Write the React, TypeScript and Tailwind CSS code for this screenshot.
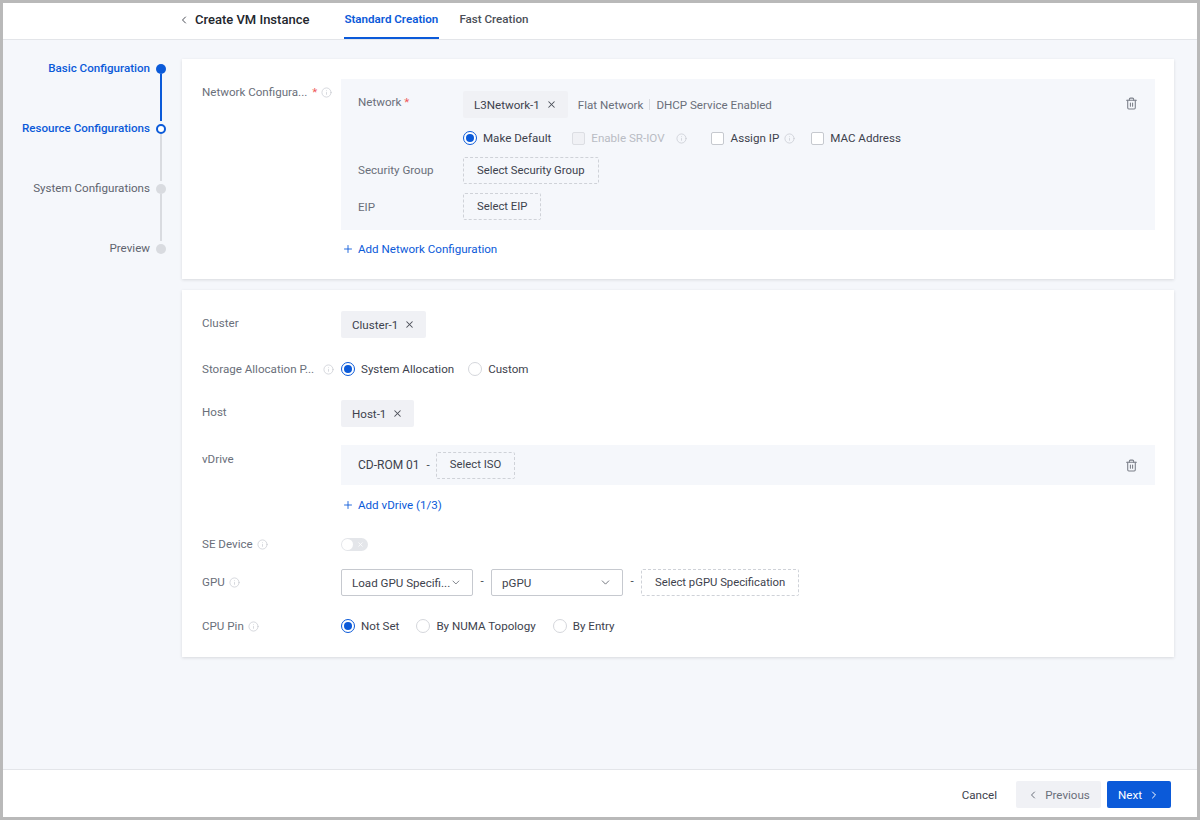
import { ChevronDown, ChevronLeft, ChevronRight, Info, Plus, Trash2, X } from "lucide-react";
import type { ReactNode } from "react";

const FONT = "font-['Roboto','Inter',sans-serif]";

function Hint({ className = "" }: { className?: string }) {
  return <Info className={`h-[11px] w-[11px] shrink-0 text-[#c4c7cf] ${className}`} strokeWidth={1.5} />;
}

function Radio({ label, checked = false }: { label: string; checked?: boolean }) {
  return (
    <span className="flex items-center gap-[6px]">
      <span
        className={`flex h-[14px] w-[14px] items-center justify-center rounded-full border bg-white ${checked ? "border-[#0b5ad9]" : "border-[#d5d7dc]"}`}
      >
        {checked && <span className="h-[8px] w-[8px] rounded-full bg-[#0b5ad9]" />}
      </span>
      <span className="text-[#3d424d]">{label}</span>
    </span>
  );
}

function Tag({ label }: { label: string }) {
  return (
    <span className="flex h-[27px] items-center gap-[6px] rounded-[2px] bg-[#f0f1f5] px-[11px] text-[#3d424d]">
      {label}
      <X className="h-[11px] w-[11px] text-[#4b4f58]" strokeWidth={2.25} />
    </span>
  );
}

function Dashed({ label }: { label: string }) {
  return (
    <span className="flex h-[27px] items-center rounded-[2px] border border-dashed border-[#cfd2d8] px-[13px] text-[11.3px] text-[#3d424d]">
      {label}
    </span>
  );
}

function Select({ label }: { label: string }) {
  return (
    <span className="flex h-[27px] w-[132px] items-center justify-between whitespace-nowrap rounded-[2px] border border-[#c6c9cf] bg-white px-[10px] text-[#3d424d]">
      {label}
      <ChevronDown className="h-[13px] w-[13px] text-[#555a64]" strokeWidth={1.5} />
    </span>
  );
}

function Row({ label, children, className = "" }: { label: ReactNode; children: ReactNode; className?: string }) {
  return (
    <div className={`flex ${className}`}>
      <div className="flex w-[159px] shrink-0 items-start whitespace-nowrap pl-[20px] text-[#6a6f7a]">{label}</div>
      <div className="min-w-0 flex-1">{children}</div>
    </div>
  );
}

function Step({ label, state, last }: { label: string; state: "done" | "active" | "todo"; last?: boolean }) {
  const text = state === "todo" ? "text-[#5f646e]" : "text-[#0b5ad9] font-medium";
  const dot =
    state === "done"
      ? "bg-[#0b5ad9]"
      : state === "active"
        ? "border-2 border-[#0b5ad9] bg-white"
        : "bg-[#d9dbe0]";
  return (
    <div className="flex h-[60px] justify-end">
      <span className={`mt-[-2px] h-[18px] leading-[18px] ${text}`}>{label}</span>
      <div className="ml-[6px] flex w-[10px] flex-col items-center pt-[3px]">
        <span className={`h-[10px] w-[10px] shrink-0 rounded-full ${dot}`} />
        {!last && <span className={`w-[2px] flex-1 ${state === "done" ? "bg-[#0b5ad9]" : "bg-[#d9dbe0]"}`} />}
      </div>
    </div>
  );
}

export default function App() {
  return (
    <div className={`flex h-[820px] w-[1200px] flex-col overflow-hidden border-[3px] border-[#b9b9b9] bg-[#f5f7fb] text-[11.6px] leading-[18px] ${FONT}`}>
      <header className="flex h-[37px] shrink-0 items-center border-b border-[#e3e5e9] bg-white pl-[175px]">
        <ChevronLeft className="mb-[3px] h-[12px] w-[12px] text-[#4b4f58]" strokeWidth={2} />
        <span className="mb-[2px] ml-[5px] text-[13px] font-medium text-[#23262d]">Create VM Instance</span>
        <div className="ml-[35px] flex h-full gap-[20px]">
          <span className="flex w-[95px] items-center border-b-2 border-[#0b5ad9] pb-[3px] font-semibold whitespace-nowrap text-[#0b5ad9]">Standard Creation</span>
          <span className="flex items-center pb-[5px] font-medium text-[#4b4f58]">Fast Creation</span>
        </div>
      </header>

      <div className="flex min-h-0 flex-1">
        <aside className="w-[179px] shrink-0 pr-[16px] pt-[21px]">
          <Step label="Basic Configuration" state="done" />
          <Step label="Resource Configurations" state="active" />
          <Step label="System Configurations" state="todo" />
          <Step label="Preview" state="todo" last />
        </aside>

        <main className="flex w-[992px] flex-col gap-[11px] pt-[19px]">
          <section className="h-[220px] bg-white pt-[20px] shadow-[0_1px_3px_rgba(0,0,0,0.12)]">
            <Row
              label={
                <span className="flex items-center pt-[4px]">
                  Network Configura...
                  <span className="ml-[5px] text-[#ef5a5a]">*</span>
                  <Hint className="ml-[4px]" />
                </span>
              }
            >
              <div className="mr-[19px] flex h-[151px] flex-col bg-[#f5f7fb] px-[17px]">
                <div className="flex items-center pt-[12px]">
                  <span className="w-[105px] pb-[6px] text-[#6a6f7a]">
                    Network <span className="text-[#ef5a5a]">*</span>
                  </span>
                  <Tag label="L3Network-1" />
                  <span className="ml-[10px] text-[#6a6f7a]">Flat Network</span>
                  <span className="mx-[6px] h-[11px] w-px bg-[#d9dbe0]" />
                  <span className="text-[#6a6f7a]">DHCP Service Enabled</span>
                  <Trash2 className="mb-[3px] ml-auto h-[13px] w-[13px] text-[#7c808a]" strokeWidth={2} />
                </div>
                <div className="mt-[11px] flex items-center pl-[105px]">
                  <Radio label="Make Default" checked />
                  <span className="ml-[21px] flex items-center gap-[6px] text-[#b9bcc4]">
                    <span className="h-[13px] w-[13px] rounded-[2px] border border-[#dcdee3] bg-[#f0f1f5]" />
                    Enable SR-IOV
                    <Hint className="ml-[5px]" />
                  </span>
                  <span className="ml-[24px] flex items-center gap-[7px] text-[#3d424d]">
                    <span className="h-[13px] w-[13px] rounded-[2px] border border-[#c6c9cf] bg-white" />
                    Assign IP
                    <Hint className="ml-[-2px]" />
                  </span>
                  <span className="ml-[16px] flex items-center gap-[6px] text-[#3d424d]">
                    <span className="h-[13px] w-[13px] rounded-[2px] border border-[#c6c9cf] bg-white" />
                    MAC Address
                  </span>
                </div>
                <div className="mt-[10px] flex items-center">
                  <span className="w-[105px] pb-[2px] text-[#6a6f7a]">Security Group</span>
                  <Dashed label="Select Security Group" />
                </div>
                <div className="mt-[9px] flex items-center">
                  <span className="w-[105px] text-[#6a6f7a]">EIP</span>
                  <Dashed label="Select EIP" />
                </div>
              </div>
              <div className="mt-[10px] flex items-center gap-[4px] pl-[1px] text-[#0b5ad9]">
                <Plus className="h-[12px] w-[12px]" strokeWidth={1.75} />
                Add Network Configuration
              </div>
            </Row>
          </section>

          <section className="h-[367px] bg-white pt-[21px] shadow-[0_1px_3px_rgba(0,0,0,0.12)]">
            <Row label={<span className="pt-[3px]">Cluster</span>}>
              <span className="inline-flex">
                <Tag label="Cluster-1" />
              </span>
            </Row>
            <Row className="mt-[22px]" label={<span className="flex items-center">Storage Allocation P...<Hint className="ml-[9px]" /></span>}>
              <div className="flex gap-[14px]">
                <Radio label="System Allocation" checked />
                <Radio label="Custom" />
              </div>
            </Row>
            <Row className="mt-[22px]" label={<span className="pt-[3px]">Host</span>}>
              <span className="inline-flex">
                <Tag label="Host-1" />
              </span>
            </Row>
            <Row className="mt-[18px]" label={<span className="pt-[5px]">vDrive</span>}>
              <div className="mr-[19px] flex h-[40px] items-center bg-[#f5f7fb] px-[17px]">
                <span className="text-[12px] text-[#3d424d]">CD-ROM 01</span>
                <span className="ml-[7px] mr-[6px] text-[#3d424d]">-</span>
                <Dashed label="Select ISO" />
                <Trash2 className="ml-auto h-[13px] w-[13px] text-[#7c808a]" strokeWidth={2} />
              </div>
              <div className="mt-[11px] flex items-center gap-[4px] pl-[1px] text-[#0b5ad9]">
                <Plus className="h-[12px] w-[12px]" strokeWidth={1.75} />
                Add vDrive (1/3)
              </div>
            </Row>
            <Row
              className="mt-[21px] h-[18px]"
              label={<span className="flex items-center">SE Device<Hint className="ml-[4px]" /></span>}
            >
              <span className="mt-[3px] flex h-[13px] w-[27px] items-center justify-between rounded-full bg-[#e4e6ea] pl-[1px] pr-[4px]">
                <span className="h-[11px] w-[11px] rounded-full bg-white" />
                <X className="h-[7px] w-[7px] text-white" strokeWidth={2.5} />
              </span>
            </Row>
            <Row className="mt-[16px]" label={<span className="flex items-center pt-[4px]">GPU<Hint className="ml-[4px]" /></span>}>
              <div className="flex items-center">
                <Select label="Load GPU Specifi..." />
                <span className="w-[18px] pb-[3px] text-center text-[#3d424d]">-</span>
                <Select label="pGPU" />
                <span className="w-[18px] pb-[3px] text-center text-[#3d424d]">-</span>
                <Dashed label="Select pGPU Specification" />
              </div>
            </Row>
            <Row className="mt-[21px]" label={<span className="flex items-center">CPU Pin<Hint className="ml-[4px]" /></span>}>
              <div className="flex gap-[17px]">
                <Radio label="Not Set" checked />
                <Radio label="By NUMA Topology" />
                <Radio label="By Entry" />
              </div>
            </Row>
          </section>
        </main>
      </div>

      <footer className="flex h-[48px] shrink-0 items-center justify-end border-t border-[#e3e5e9] bg-white pr-[26px] pt-[2px]">
        <span className="mr-[19px] text-[#3d424d]">Cancel</span>
        <span className="flex h-[27px] w-[85px] items-center justify-center gap-[6px] rounded-[2px] bg-[#f0f1f5] text-[#6a6f7a]">
          <ChevronLeft className="h-[12px] w-[12px]" strokeWidth={2} />
          Previous
        </span>
        <span className="ml-[6px] flex h-[27px] w-[64px] items-center justify-center gap-[6px] rounded-[2px] bg-[#0b5ad9] text-white">
          Next
          <ChevronRight className="h-[12px] w-[12px]" strokeWidth={2} />
        </span>
      </footer>
    </div>
  );
}
